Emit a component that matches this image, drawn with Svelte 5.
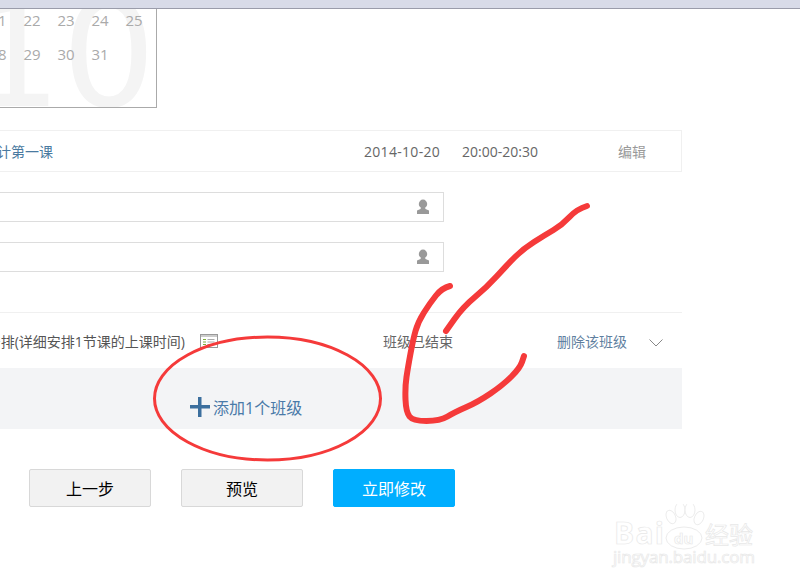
<script>
	const days = [19, 20, 21, 22, 23, 24, 25, 26, 27, 28, 29, 30, 31]

	// the two hand drawn strokes of the arrow, smoothed through midpoints
	const strokes = [
		[[587,206],[577,209],[562,225],[545,235],[523,249],[507,265],[487,287],[463,307],[446,331]],
		[[450,286],[442,288],[430,303],[418,322],[413,340],[408,367],[405,387],[406,412],[413,421],[440,421],[455,412],[478,402],[503,385],[520,368],[524,356]],
	]
	function smooth(p) {
		let d = `M${p[0][0]} ${p[0][1]}`
		for (let i = 1; i < p.length - 1; i++) {
			let mx = (p[i][0] + p[i + 1][0]) / 2
			let my = (p[i][1] + p[i + 1][1]) / 2
			d += ` Q${p[i][0]} ${p[i][1]} ${mx} ${my}`
		}
		let end = p[p.length - 1]
		return d + ` L${end[0]} ${end[1]}`
	}
</script>

{#snippet person()}
	<svg class="person" width="14" height="16" viewBox="0 0 14 16">
		<ellipse cx="7" cy="5" rx="4.2" ry="4.4" fill="#999" />
		<path d="M5 8.5 L9 8.5 L9.5 10 L13 11.5 L13 15 L1 15 L1 11.5 L4.5 10 Z" fill="#999" />
	</svg>
{/snippet}

<div class="page">
	<div class="topbar"></div>

	<div class="calendar">
		<span class="month">10</span>
		<div class="days">
			{#each days as d}
				<span>{d}</span>
			{/each}
		</div>
	</div>

	<div class="lesson">
		<div class="title"><span>设计第一课</span></div>
		<span class="date">2014-10-20</span>
		<span class="time">20:00-20:30</span>
		<span class="edit">编辑</span>
	</div>

	<div class="field">{@render person()}</div>
	<div class="field">{@render person()}</div>

	<div class="classrow">
		<div class="plan"><span>课时安排(详细安排1节课的上课时间)</span></div>
		<svg class="tableicon" width="18" height="14" viewBox="0 0 18 14">
			<rect x="0.5" y="0.5" width="17" height="13" fill="#fff" stroke="#999" />
			<rect x="1" y="1" width="16" height="2" fill="#ccc" />
			<path d="M3 5.5h3M3 8h3M3 10.5h3" stroke="#7fae3c" />
			<path d="M7.5 5.5h7M7.5 8h7M7.5 10.5h7" stroke="#aaa" />
		</svg>
		<span class="ended">班级已结束</span>
		<span class="remove">删除该班级</span>
		<svg class="chevron" width="14" height="8" viewBox="0 0 14 8">
			<path d="M0.5 0.5 L7 7 L13.5 0.5" fill="none" stroke="#888" />
		</svg>
	</div>

	<div class="addband">
		<svg class="plus" width="20" height="20" viewBox="0 0 20 20">
			<path d="M0 8h8V0h3.5v8H20v3.5H11.5V20H8V11.5H0Z" fill="#3c6f9e" />
		</svg>
		<span>添加1个班级</span>
	</div>

	<div class="actions">
		<button>上一步</button>
		<button>预览</button>
		<button class="primary">立即修改</button>
	</div>

	<svg class="ink" width="800" height="586" viewBox="0 0 800 586">
		<g fill="none" stroke="#f53a3a" stroke-linecap="round" stroke-linejoin="round">
			<ellipse cx="267.5" cy="398.5" rx="113" ry="61.5" stroke-width="3" />
			{#each strokes as s}
				<path stroke-width="6" d={smooth(s)} />
			{/each}
		</g>
	</svg>

	<svg class="mark" width="160" height="70" viewBox="0 0 160 70">
		<g fill="#fff" stroke="#ececec">
			<ellipse cx="69" cy="13" rx="4.5" ry="7" transform="rotate(-25 69 13)" />
			<ellipse cx="78" cy="6" rx="5" ry="7.5" />
			<ellipse cx="88" cy="6" rx="5" ry="7.5" />
			<ellipse cx="97" cy="14" rx="4.5" ry="7" transform="rotate(25 97 14)" />
			<ellipse cx="82" cy="34" rx="18" ry="11" />
		</g>
		<g class="marktext">
			<text x="12" y="40" font-size="30" font-weight="700" textLength="50">Bai</text>
			<text x="72" y="40" font-size="15" font-weight="700">du</text>
			<text x="103" y="40" font-size="24">经验</text>
			<text x="11" y="59" font-size="17" textLength="142">jingyan.baidu.com</text>
		</g>
	</svg>
</div>

<style>
	:global(body) {
		margin: 0;
		background: #fff;
	}
	.page {
		position: relative;
		width: 800px;
		height: 586px;
		overflow: hidden;
		font-family: "Open Sans", "Noto Sans CJK SC", sans-serif;
		font-size: 14px;
		color: #666;
	}
	.topbar {
		height: 8px;
		background: #d8dbe8;
		border-bottom: 1px solid #9a9caa;
	}
	.calendar {
		position: relative;
		box-sizing: border-box;
		width: 157px;
		height: 99px;
		border-right: 1px solid #aaa;
		border-bottom: 1px solid #aaa;
		overflow: hidden;
	}
	.month {
		position: absolute;
		right: 0;
		bottom: -30px;
		font-family: "DejaVu Sans", sans-serif;
		font-size: 148px;
		line-height: 1.1;
		color: #f4f4f4;
	}
	.days {
		position: relative;
		display: grid;
		grid-template-columns: repeat(7, 34px);
		grid-auto-rows: 34px;
		justify-content: end;
		align-items: center;
		justify-items: center;
		margin: -6px 5px 0 0;
		font-size: 15px;
		color: #aaa;
	}
	.lesson {
		display: flex;
		align-items: center;
		box-sizing: border-box;
		width: 692px;
		height: 42px;
		margin: 22px 0 0 -10px;
		border: 1px solid #f0f0f0;
	}
	.title {
		display: flex;
		justify-content: flex-end;
		width: 62px;
		white-space: nowrap;
		color: #4a7aa0;
	}
	.date {
		margin-left: 311px;
		width: 98px;
		letter-spacing: 0.3px;
	}
	.time {
		width: 156px;
	}
	.edit {
		color: #999;
	}
	.field {
		display: flex;
		align-items: center;
		justify-content: flex-end;
		box-sizing: border-box;
		width: 454px;
		height: 30px;
		margin: 20px 0 0 -10px;
		padding-right: 13px;
		border: 1px solid #ddd;
	}
	.classrow {
		display: flex;
		align-items: center;
		box-sizing: border-box;
		width: 682px;
		height: 56px;
		margin-top: 40px;
		border-top: 1px solid #f0f0f0;
	}
	.plan {
		display: flex;
		justify-content: flex-end;
		width: 185px;
		white-space: nowrap;
		color: #555;
	}
	.tableicon {
		margin-left: 15px;
	}
	.ended {
		margin-left: 165px;
		width: 174px;
	}
	.remove {
		color: #5f7f9f;
		width: 92px;
	}
	.chevron {
		margin-top: 4px;
	}
	.addband {
		display: flex;
		align-items: center;
		box-sizing: border-box;
		width: 682px;
		height: 61px;
		padding: 17px 0 0 190px;
		background: #f3f4f6;
		font-size: 16px;
		color: #4a7aa8;
	}
	.plus {
		margin-right: 3px;
	}
	.actions {
		display: flex;
		gap: 30px;
		margin: 40px 0 0 29px;
	}
	button {
		box-sizing: border-box;
		width: 122px;
		height: 38px;
		padding: 0;
		border: 1px solid #d8d8d8;
		border-radius: 2px;
		background: #f2f2f2;
		font: inherit;
		font-size: 16px;
		color: #000;
	}
	.primary {
		border-color: #00aeff;
		background: #00aeff;
		color: #fff;
	}
	.ink {
		position: absolute;
		left: 0;
		top: 0;
		pointer-events: none;
	}
	.mark {
		position: absolute;
		left: 602px;
		top: 504px;
	}
	.marktext text {
		fill: #fff;
		stroke: #e8e8e8;
		stroke-width: 0.7;
	}
</style>
